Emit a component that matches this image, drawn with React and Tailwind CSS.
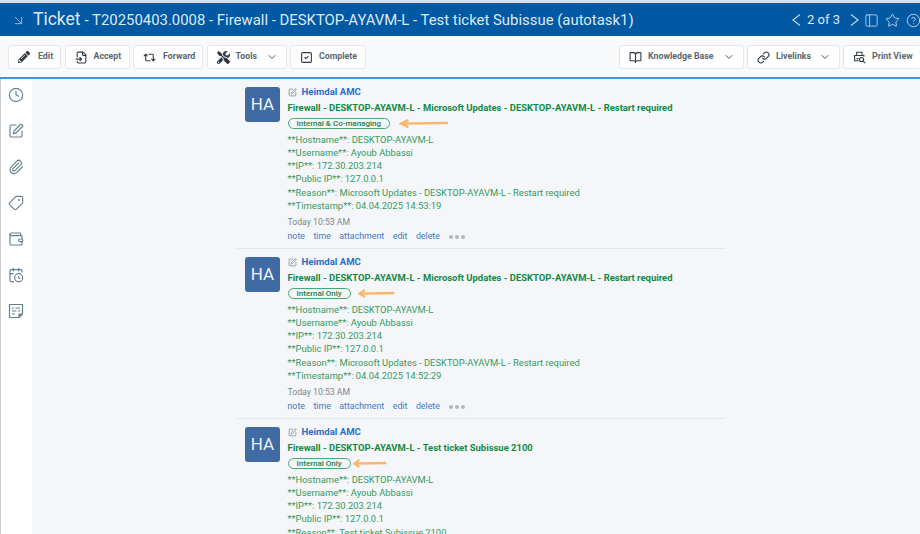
import {
  ArrowDownRight, ChevronDown, PanelLeft, Star, CircleHelp,
  FileInput, Repeat2, SquareCheck, BookOpen, Link,
  Clock, SquarePen, Paperclip, Tag, Wallet, CalendarClock,
} from 'lucide-react'
import { FaPencilAlt, FaTools } from 'react-icons/fa'

function PrintViewIcon({ size, className }) {
  return (
    <svg viewBox="0 0 16 16" width={size} height={size} fill="none" stroke="currentColor" strokeWidth="1.3" className={className}>
      <path d="M4.5 5V1.5h6.5V5" />
      <path d="M7 12H2V5.5h11.5V7" />
      <path d="M4 9.5h3" />
      <circle cx="10.5" cy="10.5" r="2.6" />
      <path d="M12.5 12.5L15 15" />
    </svg>
  )
}

function NotesIcon({ size, className }) {
  return (
    <svg viewBox="0 0 16 16" width={size} height={size} fill="none" stroke="currentColor" strokeWidth="1.2" className={className}>
      <path d="M1.5 1.5h13v9.5l-3.5 3.5H1.5z" />
      <path d="M14.5 11h-3.5v3.5" fill="currentColor" />
      <path d="M4 5h2M7.5 5H12M4 8h4.5M10 8h2M4 11h3" />
    </svg>
  )
}

const TOOLS_LEFT = [
  { label: 'Edit', icon: FaPencilAlt, w: 'w-[53px]', gap: 'gap-[8px]', size: 12 },
  { label: 'Accept', icon: FileInput, w: 'w-[65px]', gap: 'gap-[6px]' },
  { label: 'Forward', icon: Repeat2, w: 'w-[70px]', gap: 'gap-[7px]' },
  { label: 'Tools', icon: FaTools, w: 'w-[80px]', gap: 'gap-[6px]', menu: true },
  { label: 'Complete', icon: SquareCheck, w: 'w-[76px]', gap: 'gap-[6px]' },
]

const TOOLS_RIGHT = [
  { label: 'Knowledge Base', icon: BookOpen, w: 'w-[125px]', gap: 'gap-[6px]', menu: true },
  { label: 'Livelinks', icon: Link, w: 'w-[93px]', gap: 'gap-[6px]', menu: true },
  { label: 'Print View', icon: PrintViewIcon, w: 'w-[78px]', gap: 'gap-[6px]' },
]

const SIDE_ICONS = [Clock, SquarePen, Paperclip, Tag, Wallet, CalendarClock, NotesIcon]

const NOTES = [
  {
    title: 'Firewall - DESKTOP-AYAVM-L - Microsoft Updates - DESKTOP-AYAVM-L - Restart required',
    pill: 'Internal & Co-managing',
    arrow: 'w-[50px] ml-[9px]',
    reason: 'Microsoft Updates - DESKTOP-AYAVM-L - Restart required',
    stamp: '04.04.2025 14:53:19',
  },
  {
    title: 'Firewall - DESKTOP-AYAVM-L - Microsoft Updates - DESKTOP-AYAVM-L - Restart required',
    pill: 'Internal Only',
    arrow: 'w-[37px] ml-[7px]',
    reason: 'Microsoft Updates - DESKTOP-AYAVM-L - Restart required',
    stamp: '04.04.2025 14:52:29',
  },
  {
    title: 'Firewall - DESKTOP-AYAVM-L - Test ticket Subissue 2100',
    pill: 'Internal Only',
    arrow: 'w-[34px] ml-[2px]',
    reason: 'Test ticket Subissue 2100',
    stamp: '04.04.2025 14:51:02',
  },
]

function ToolButton({ tool }) {
  const Icon = tool.icon
  return (
    <button className={`${tool.w} ${tool.gap} h-[24px] shrink-0 flex items-center pl-[9px] bg-white rounded-[3px] border border-[#e4e7eb] text-[8.8px] font-bold text-[#5b6670]`}>
      <Icon size={tool.size || 13} className="text-[#2f3a44] shrink-0" />
      <span className="whitespace-nowrap">{tool.label}</span>
      {tool.menu && <ChevronDown size={12} className="ml-auto mr-[8px] text-[#4d5862]" />}
    </button>
  )
}

function Arrow({ className }) {
  return (
    <div className={`${className} h-[9px] flex items-center`}>
      <svg viewBox="0 0 48 9" preserveAspectRatio="none" className="w-full h-[9px]" fill="none" stroke="#f8b56c" strokeWidth="2.4">
        <path d="M47 4 L3 4.6" />
        <path d="M9 1 L2 4.6 L9 8" />
      </svg>
    </div>
  )
}

function Note({ note, last }) {
  return (
    <div className={`flex pl-[8px] pt-[8px] h-[170px] ${last ? '' : 'border-b border-[#e5e7ea]'}`}>
      <div className="w-[35px] h-[35px] shrink-0 rounded-[3px] bg-[#3f6aa3] text-[#eef2f8] text-[17px] flex items-center justify-center">HA</div>
      <div className="ml-[7.5px] min-w-0">
        <div className="h-[13px] flex items-center gap-[5px] mt-[-1px]">
          <SquarePen size={9} className="text-[#7c858d]" />
          <span className="text-[9.6px] font-bold text-[#2670c9]">Heimdal AMC</span>
        </div>
        <div className="mt-[2px] h-[15px] flex items-center text-[9.45px] font-bold text-[#108a45] whitespace-nowrap">{note.title}</div>
        <div className="mt-[2px] flex items-center">
          <span className="h-[11px] px-[8px] flex items-center rounded-full border border-[#48a875] text-[8px] font-medium text-[#1c8048] whitespace-nowrap">{note.pill}</span>
          <Arrow className={note.arrow} />
        </div>
        <div className="mt-[4px] text-[9.4px] leading-[13.15px] text-[#339a60] whitespace-nowrap">
          <div>**Hostname**: DESKTOP-AYAVM-L</div>
          <div>**Username**: Ayoub Abbassi</div>
          <div>**IP**: 172.30.203.214</div>
          <div>**Public IP**: 127.0.0.1</div>
          <div>**Reason**: {note.reason}</div>
          <div>**Timestamp**: {note.stamp}</div>
        </div>
        <div className="mt-[4px] h-[14px] flex items-center text-[8.7px] text-[#7d858c]">Today 10:53 AM</div>
        <div className="flex items-center gap-[8.5px] text-[8.8px] text-[#3b7bc4] h-[14px]">
          <span>note</span>
          <span>time</span>
          <span>attachment</span>
          <span>edit</span>
          <span>delete</span>
          <span className="flex gap-[2px] ml-[1px]">
            <i className="w-[4px] h-[4px] rounded-full bg-[#b3b7bb]" />
            <i className="w-[4px] h-[4px] rounded-full bg-[#b3b7bb]" />
            <i className="w-[4px] h-[4px] rounded-full bg-[#b3b7bb]" />
          </span>
        </div>
      </div>
    </div>
  )
}

export default function App() {
  return (
    <div className="w-[920px] h-[534px] overflow-hidden flex flex-col bg-[#f5f6f9] font-['Roboto',sans-serif]">
      <div className="h-[3px] shrink-0 bg-[#dcdde0]" />

      {/* Title bar */}
      <header className="h-[33px] shrink-0 bg-[#0159a4] flex items-center pt-[1px] text-[#dfe8f2]">
        <ArrowDownRight size={15} strokeWidth={1.5} className="ml-[11px] text-[#9db9d6]" />
        <span className="ml-[7px] text-[17.5px] leading-none">Ticket</span>
        <span className="ml-[4px] text-[14.9px] whitespace-nowrap">- T20250403.0008 - Firewall - DESKTOP-AYAVM-L - Test ticket Subissue (autotask1)</span>
        <div className="ml-auto flex items-center">
          <svg viewBox="0 0 9 12" className="w-[9px] h-[12px] text-[#c2d3e6]" fill="none" stroke="currentColor" strokeWidth="1.2"><path d="M8 0.5L1 6l7 5.5" /></svg>
          <span className="ml-[6px] text-[13px]">2 of 3</span>
          <svg viewBox="0 0 9 12" className="ml-[10px] w-[9px] h-[12px] text-[#c2d3e6]" fill="none" stroke="currentColor" strokeWidth="1.2"><path d="M1 0.5L8 6l-7 5.5" /></svg>
          <PanelLeft size={15} strokeWidth={1.5} className="ml-[5px] text-[#b8cce1]" />
          <Star size={15} strokeWidth={1.5} className="ml-[6px] text-[#c2d3e6]" />
          <CircleHelp size={15} strokeWidth={1.5} className="ml-[6px] mr-[-1px] text-[#c2d3e6]" />
        </div>
      </header>

      {/* Toolbar */}
      <div className="h-[43px] shrink-0 bg-[#f8f9fb] border-b-2 border-[#3d96e0] flex items-center pl-[8px] pt-[1px]">
        <div className="flex gap-[3.5px]">
          {TOOLS_LEFT.map(t => <ToolButton key={t.label} tool={t} />)}
        </div>
        <div className="ml-auto flex gap-[3px] mr-[-1px]">
          {TOOLS_RIGHT.map(t => <ToolButton key={t.label} tool={t} />)}
        </div>
      </div>

      <div className="flex-1 flex min-h-0">
        {/* Side rail */}
        <aside className="w-[32px] shrink-0 bg-white border-l border-[#c9cbce] flex flex-col items-center pt-[8px] gap-[20px] pr-[1px]">
          {SIDE_ICONS.map((Icon, i) => (
            <Icon key={i} size={16} strokeWidth={1.7} className={`text-[#66808f] ${i === 3 ? 'rotate-90' : ''}`} />
          ))}
        </aside>

        {/* Notes */}
        <main className="flex-1 min-w-0 pl-[205px] overflow-hidden">
          <div className="w-[488px]">
            {NOTES.map((n, i) => <Note key={i} note={n} last={i === NOTES.length - 1} />)}
          </div>
        </main>
      </div>
    </div>
  )
}
